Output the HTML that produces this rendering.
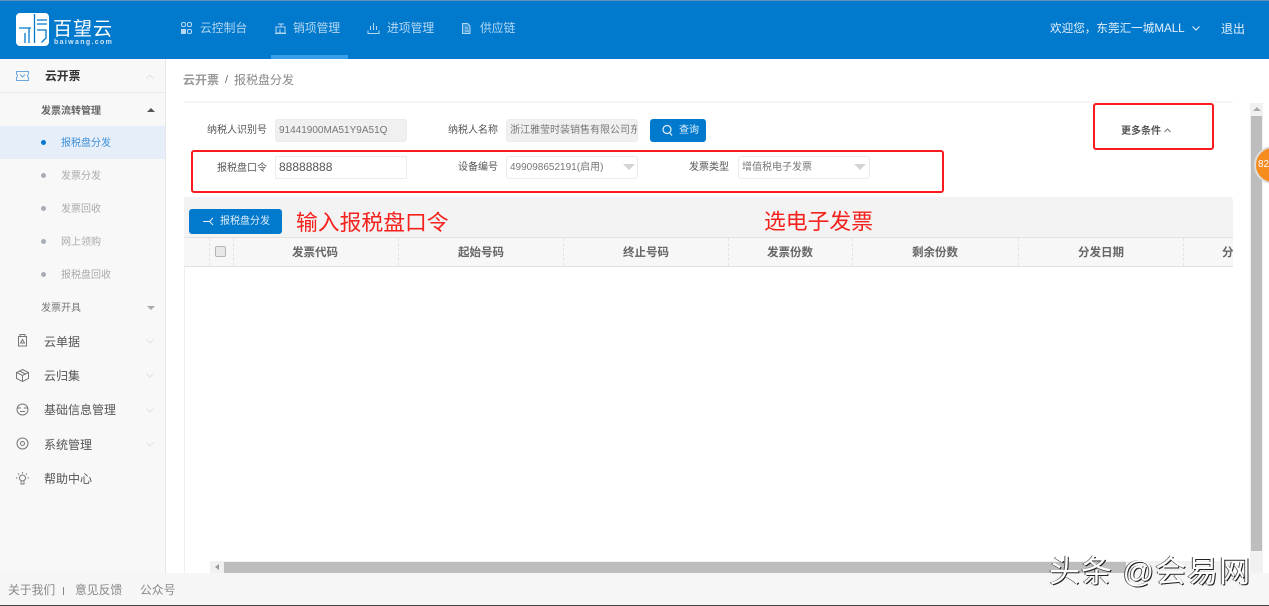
<!DOCTYPE html>
<html lang="zh"><head><meta charset="utf-8"><title>报税盘分发</title>
<style>
html,body{margin:0;padding:0;width:1269px;height:606px;overflow:hidden;background:#fff}
body{position:relative;font-family:"Liberation Sans","Noto Sans CJK SC",sans-serif;color:#666}
.a{position:absolute}
.t{position:absolute;white-space:nowrap;line-height:16px}
.nav{color:#b5d8f2;font-size:11.8px}
.s{font-size:10px;color:#aaa}
.m{font-size:12px;color:#555}
.dot{position:absolute;left:41px;width:5px;height:5px;border-radius:50%;background:#a9adb5}
.lb{font-size:10px;color:#555}
.inp{position:absolute;box-sizing:border-box;height:23px;border:1px solid #ececec;border-radius:3px;font-size:10px;color:#777;line-height:21px;padding-left:3px;white-space:nowrap;overflow:hidden}
.red{position:absolute;box-sizing:border-box;border:2px solid #fb1a1d;border-radius:3px}
.th{position:absolute;top:245px;font-size:11.5px;font-weight:bold;color:#666;line-height:16px;white-space:nowrap}
.col{position:absolute;top:238px;width:0;height:28px;border-left:1px dashed #e4e4e4}
.tri{position:absolute;width:0;height:0;border-left:6px solid transparent;border-right:6px solid transparent;border-top:6px solid #d4d4d4}
svg{position:absolute;overflow:visible}
</style></head><body>
<!-- header -->
<div class="a" style="left:0;top:0;width:1269px;height:59px;background:#0179cd"></div>
<div class="a" style="left:0;top:0;width:1269px;height:1px;background:#5e93bd"></div>
<div class="a" style="left:271px;top:55px;width:77px;height:4px;background:#3a9fe8"></div>
<div class="a" style="left:16px;top:13px;width:33px;height:33px;background:#fff;border-radius:4px"></div>
<svg style="left:16px;top:13px" width="33" height="33" fill="none" stroke="#0179cd" stroke-width="1.3"><path d="M3 15H15M13 15V30M9 20V30M18.5 1V30M21 7H31M21 11H31M21 17H30V25L25.5 29.5"/></svg>
<div class="t" style="left:53px;top:19px;font-size:19px;line-height:22px;color:#fff;letter-spacing:1px">百望云</div>
<div class="t" style="left:54px;top:39px;font-size:7px;line-height:8px;font-weight:bold;color:#cfe6f6;letter-spacing:1.35px">baiwang.com</div>
<svg style="left:181px;top:22px" width="12" height="13" fill="none" stroke="#b5d8f2"><rect x=".5" y=".5" width="4" height="4" rx="1.5"/><rect x="6.5" y=".5" width="4" height="4" rx="1.5"/><rect x=".5" y="7.5" width="4" height="4" fill="#b5d8f2"/><rect x="6.5" y="7.5" width="4" height="4" rx="1.5"/></svg>
<div class="t nav" style="left:200px;top:20px">云控制台</div>
<svg style="left:275px;top:23px" width="11" height="12" fill="none" stroke="#b5d8f2"><path d="M3 1H9M6 1V4M1 4H10V10H1ZM0 10.5H11M5 6V10"/></svg>
<div class="t nav" style="left:293px;top:20px">销项管理</div>
<svg style="left:368px;top:23px" width="11" height="12" fill="none" stroke="#b5d8f2"><path d="M5.5 0V7M2.5 3V7M8.5 3V7M0 7.5V10.5H11V7.5"/></svg>
<div class="t nav" style="left:387px;top:20px">进项管理</div>
<svg style="left:462px;top:23px" width="9" height="11" fill="none" stroke="#b5d8f2"><path d="M.5.5H5.5L8 3V10.5H.5ZM3 5H6M3 8H7" fill="#b5d8f2" fill-opacity=".3"/></svg>
<div class="t nav" style="left:480px;top:20px">供应链</div>
<div class="t" style="left:1050px;top:21px;font-size:11.6px;color:#e4f1fa">欢迎您，东莞汇一城MALL</div>
<svg style="left:1192px;top:26px" width="8" height="5" fill="none" stroke="#e4f1fa"><path d="M.5.5L4 4L7.5.5"/></svg>
<div class="t" style="left:1221px;top:21px;font-size:12px;color:#e4f1fa">退出</div>
<!-- sidebar -->
<div class="a" style="left:0;top:59px;width:165px;height:514px;background:#f8f8f8;border-right:1px solid #e6e6e6"></div>
<div class="a" style="left:0;top:92px;width:165px;height:1px;background:#e8e8e8"></div>
<div class="a" style="left:0;top:126px;width:165px;height:33px;background:#e6eefa"></div>
<svg style="left:16px;top:71px" width="13" height="10" fill="none" stroke="#6ba6dd"><path d="M.5.5H12.5V3A2 2 0 0 0 12.5 6.5V9.5H.5V6.5A2 2 0 0 0 .5 3ZM4 3.5L6.5 6L9 3.5"/></svg>
<div class="t" style="left:45px;top:68px;font-size:11.8px;font-weight:bold;color:#333">云开票</div>
<svg style="left:146px;top:74px" width="8" height="5" fill="none" stroke="#e2e2e2"><path d="M.5 4.5L4 1L7.5 4.5"/></svg>
<div class="t" style="left:41px;top:104px;font-size:10px;font-weight:bold;color:#666">发票流转管理</div>
<div class="tri" style="left:147px;top:108px;border-left-width:4px;border-right-width:4px;border-top:0;border-bottom:4px solid #555"></div>
<div class="dot" style="top:140px;background:#0179cd"></div>
<div class="t" style="left:61px;top:136px;font-size:10px;color:#3f8fd6">报税盘分发</div>
<div class="dot" style="top:173px"></div><div class="t s" style="left:61px;top:169px">发票分发</div>
<div class="dot" style="top:206px"></div><div class="t s" style="left:61px;top:202px">发票回收</div>
<div class="dot" style="top:239px"></div><div class="t s" style="left:61px;top:235px">网上领购</div>
<div class="dot" style="top:272px"></div><div class="t s" style="left:61px;top:268px">报税盘回收</div>
<div class="t" style="left:41px;top:301px;font-size:10px;color:#777">发票开具</div>
<div class="tri" style="left:147px;top:306px;border-left-width:4px;border-right-width:4px;border-top:4px solid #aaa"></div>
<svg style="left:17px;top:334px" width="11" height="13" fill="none" stroke="#777"><path d="M3 .5H8V2.5H3ZM1.5 2.5H9.5V12H1.5ZM3.5 9L5.5 5.5L7.5 9Z"/></svg>
<div class="t m" style="left:44px;top:334px">云单据</div>
<svg style="left:16px;top:369px" width="13" height="13" fill="none" stroke="#777"><path d="M6.5.5L12.5 3.5V9.5L6.5 12.5L.5 9.5V3.5ZM.5 3.5L6.5 6.5L12.5 3.5M6.5 6.5V12.5M3.5 2L9.5 5"/></svg>
<div class="t m" style="left:44px;top:368px">云归集</div>
<svg style="left:16px;top:403px" width="13" height="13" fill="none" stroke="#777"><circle cx="6.5" cy="6.5" r="5.5"/><path d="M1 5H5M8 5H12M4 8.5H9"/></svg>
<div class="t m" style="left:44px;top:402px">基础信息管理</div>
<svg style="left:16px;top:437px" width="13" height="13" fill="none" stroke="#777"><circle cx="6.5" cy="6.5" r="5.5"/><circle cx="6.5" cy="6.5" r="2"/></svg>
<div class="t m" style="left:44px;top:437px">系统管理</div>
<svg style="left:16px;top:472px" width="13" height="14" fill="none" stroke="#777"><circle cx="6.5" cy="6" r="3"/><path d="M5 9.5V12H8V9.5M6.5 0V1.5M0 6H1.5M11.5 6H13M2 1.5L3 2.5M11 1.5L10 2.5"/></svg>
<div class="t m" style="left:44px;top:471px">帮助中心</div>
<svg style="left:146px;top:339px" width="8" height="5" fill="none" stroke="#e2e2e2"><path d="M.5.5L4 4L7.5.5"/></svg>
<svg style="left:146px;top:373px" width="8" height="5" fill="none" stroke="#e2e2e2"><path d="M.5.5L4 4L7.5.5"/></svg>
<svg style="left:146px;top:408px" width="8" height="5" fill="none" stroke="#e2e2e2"><path d="M.5.5L4 4L7.5.5"/></svg>
<svg style="left:146px;top:442px" width="8" height="5" fill="none" stroke="#e2e2e2"><path d="M.5.5L4 4L7.5.5"/></svg>
<!-- breadcrumb -->
<div class="t" style="left:183px;top:72px;font-size:12px;color:#999;font-weight:bold">云开票</div>
<div class="t" style="left:225px;top:72px;font-size:11px;color:#666">/</div>
<div class="t" style="left:234px;top:72px;font-size:12px;color:#888">报税盘分发</div>
<div class="a" style="left:184px;top:101px;width:1049px;height:2px;background:#f6f6f6"></div>
<!-- form -->
<div class="t lb" style="left:207px;top:123px">纳税人识别号</div>
<div class="inp" style="left:275px;top:119px;width:132px;background:#f0f0f0;font-size:10px">91441900MA51Y9A51Q</div>
<div class="t lb" style="left:448px;top:123px">纳税人名称</div>
<div class="inp" style="left:506px;top:119px;width:132px;background:#f0f0f0">浙江雅莹时装销售有限公司东</div>
<div class="a" style="left:650px;top:119px;width:56px;height:23px;background:#0179cd;border-radius:3px"></div>
<svg style="left:662px;top:125px" width="11" height="11" fill="none" stroke="#e4f1fa" stroke-width="1.2"><circle cx="5" cy="4.5" r="4"/><path d="M8 8L10 10.5"/></svg>
<div class="t" style="left:679px;top:123px;font-size:10px;color:#e4f1fa">查询</div>
<div class="t" style="left:1121px;top:124px;font-size:10px;color:#555;font-weight:bold">更多条件</div>
<svg style="left:1164px;top:128px" width="7" height="5" fill="none" stroke="#777"><path d="M.5 4L3.5 1L6.5 4"/></svg>
<div class="t lb" style="left:217px;top:161px">报税盘口令</div>
<div class="inp" style="left:275px;top:156px;width:132px;height:23px;border-radius:0;font-size:12px;color:#555">88888888</div>
<div class="t lb" style="left:458px;top:160px">设备编号</div>
<div class="inp" style="left:506px;top:156px;width:132px;line-height:22px">499098652191(启用)</div>
<div class="tri" style="left:623px;top:164px"></div>
<div class="t lb" style="left:689px;top:160px">发票类型</div>
<div class="inp" style="left:738px;top:156px;width:132px;line-height:22px">增值税电子发票</div>
<div class="tri" style="left:854px;top:164px"></div>
<div class="red" style="left:191px;top:150px;width:753px;height:43px"></div>
<div class="red" style="left:1093px;top:103px;width:121px;height:47px"></div>
<!-- table -->
<div class="a" style="left:184px;top:197px;width:1049px;height:376px;background:#fff;border-left:1px solid #eee"></div>
<div class="a" style="left:184px;top:197px;width:1049px;height:40px;background:#f3f3f3;border-radius:3px 3px 0 0"></div>
<div class="a" style="left:189px;top:209px;width:93px;height:25px;background:#0179cd;border-radius:3px"></div>
<svg style="left:203px;top:217px" width="12" height="9" fill="none" stroke="#e4f1fa"><path d="M0 4.5H7M10 1L6.5 4.5L10 8"/></svg>
<div class="t" style="left:220px;top:214px;font-size:10px;color:#dcecf8">报税盘分发</div>
<div class="t" style="left:296px;top:211px;font-size:21.8px;line-height:24px;color:#f5211c">输入报税盘口令</div>
<div class="t" style="left:764px;top:210px;font-size:21.8px;line-height:24px;color:#f5211c">选电子发票</div>
<div class="a" style="left:184px;top:237px;width:1049px;height:30px;box-sizing:border-box;background:#f7f7f7;border-top:1px solid #e2e2e2;border-bottom:1px solid #e2e2e2"></div>
<div class="col" style="left:209px"></div><div class="col" style="left:233px"></div><div class="col" style="left:398px"></div><div class="col" style="left:563px"></div><div class="col" style="left:728px"></div><div class="col" style="left:852px"></div><div class="col" style="left:1018px"></div><div class="col" style="left:1183px"></div>
<div class="a" style="left:215px;top:246px;width:9px;height:9px;background:#e8e8e8;border:1px solid #b5b5b5;border-radius:2px"></div>
<div class="th" style="left:292px">发票代码</div>
<div class="th" style="left:458px">起始号码</div>
<div class="th" style="left:623px">终止号码</div>
<div class="th" style="left:767px">发票份数</div>
<div class="th" style="left:912px">剩余份数</div>
<div class="th" style="left:1078px">分发日期</div>
<div class="a" style="left:1222px;top:245px;width:11px;height:16px;overflow:hidden;font-size:11.5px;font-weight:bold;color:#666;line-height:16px">分</div>
<!-- scrollbars -->
<div class="a" style="left:210px;top:561px;width:1023px;height:12px;background:#f1f1f1"></div>
<div class="a" style="left:224px;top:562px;width:902px;height:11px;background:#bdbdbd"></div>
<div class="tri" style="left:215px;top:564px;border-top:3.5px solid transparent;border-bottom:3.5px solid transparent;border-right:4px solid #999;border-left:0"></div>
<div class="a" style="left:1250px;top:103px;width:13px;height:470px;background:#f1f1f1"></div>
<div class="a" style="left:1251px;top:116px;width:11px;height:435px;background:#bdbdbd"></div>
<div class="tri" style="left:1253px;top:107px;border-left-width:4px;border-right-width:4px;border-top:0;border-bottom:4px solid #aaa"></div>
<!-- orange badge -->
<div class="a" style="left:1254px;top:146px;width:38px;height:38px;box-sizing:border-box;border-radius:50%;background:#f68b1e;border:2px solid #ddd"></div>
<div class="t" style="left:1258px;top:157px;font-size:10px;color:#fff">82</div>
<!-- footer -->
<div class="a" style="left:0;top:573px;width:1269px;height:32px;background:#f6f6f6"></div>
<div class="a" style="left:0;top:605px;width:1269px;height:1px;background:#444"></div>
<div class="t" style="left:8px;top:582px;font-size:11.8px;color:#888">关于我们</div>
<div class="a" style="left:63px;top:587px;width:1px;height:8px;background:#888"></div>
<div class="t" style="left:75px;top:582px;font-size:11.8px;color:#888">意见反馈</div>
<div class="t" style="left:140px;top:582px;font-size:11.8px;color:#888">公众号</div>
<!-- watermark -->
<div class="t" style="left:1049px;top:555px;font-size:31px;line-height:34px;letter-spacing:1px;color:#fff;text-shadow:1px 1px 0 #222,-1px 0 0 #555">头条 @会易网</div>
</body></html>
